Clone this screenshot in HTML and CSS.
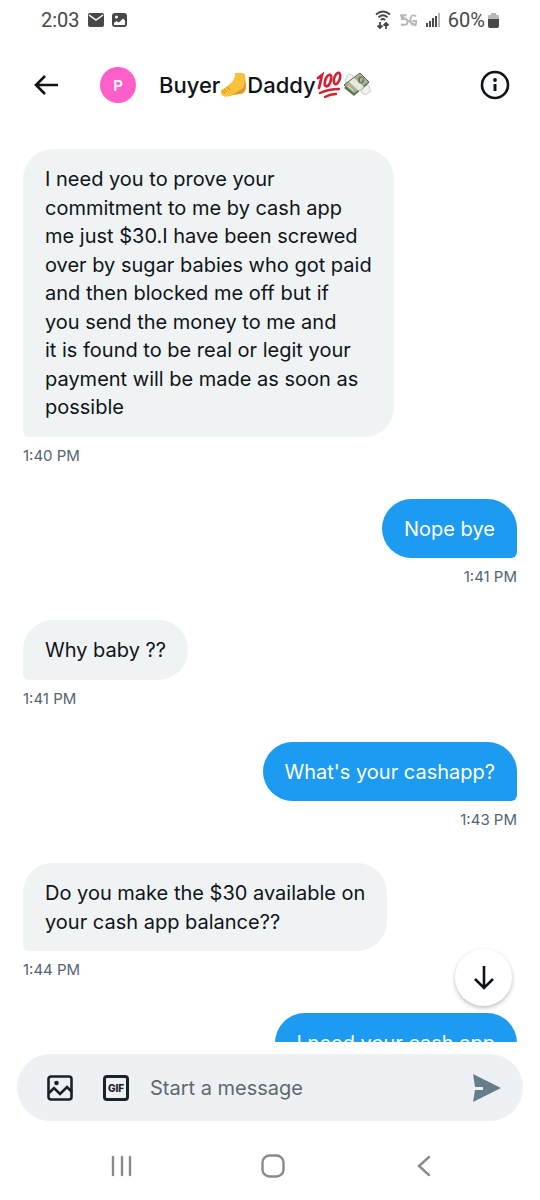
FILE: index.html
```
<!DOCTYPE html>
<html lang="en">
<head>
<meta charset="utf-8">
<meta name="viewport" content="width=device-width, initial-scale=1">
<title>Messages</title>
<link rel="stylesheet" href="styles.css">
</head>
<body>
<div class="status">
  <div class="status-group">
    <span class="clock">2:03</span>
    <svg width="16" height="14" viewBox="0 0 16 14"><rect width="16" height="14" rx="2" fill="#484848"/><path d="M1 2l7 5 7-5" fill="none" stroke="#fff" stroke-width="1.5"/></svg>
    <svg width="15" height="14" viewBox="0 0 15 14"><rect width="15" height="14" rx="3" fill="#484848"/><circle cx="4.500" cy="4" r="1.500" fill="#fff"/><path d="M2 10l2.500-2 2.500 1.500L11 5.500l2 2V12H2z" fill="#fff"/></svg>
  </div>
  <div class="status-group status-right">
    <svg width="16" height="20" viewBox="0 0 16 20" fill="none" stroke="#484848" stroke-width="1.800"><path d="M1 4.500q7-6 14 0M3.500 7.300q4.500-4 9 0M5.800 10q2.200-2 4.400 0"/><path d="M5 12v6M2.500 15.500L5 18l2.500-2.500M11 19v-6M8.500 15.500L11 13l2.500 2.500"/></svg>
    <svg class="net" width="19" height="14" viewBox="0 0 20 14" fill="none" stroke="#b8b8b8" stroke-width="2"><path d="M8 2H3v4h3q3 0 3 3t-3 3H2M18 3q-6-3-6 4t6 4V8h-4M1 2l17 11"/></svg>
    <svg width="14" height="14" viewBox="0 0 14 14" fill="#484848"><path d="M0 10h2v4H0zM3 8h2v6H3zM6 5h2v9H6zM9 3h2v11H9z"/><path d="M12 0h2v14h-2z" fill="#b8b8b8"/></svg>
    <span class="battery"><span>60%</span>
    <svg width="11" height="15" viewBox="0 0 11 15"><path d="M3 0h5v2h2q1 0 1 1v4H0V3q0-1 1-1h2z" fill="#b8b8b8"/><path d="M0 6h11v7q0 2-2 2H2q-2 0-2-2z" fill="#484848"/></svg></span>
  </div>
</div>

<header class="header">
  <button class="icon-btn" aria-label="Back"><svg width="26" height="22" viewBox="0 0 26 22" fill="none" stroke="#0f1419" stroke-width="2.600"><path d="M25 11H3M12 2l-9 9 9 9"/></svg></button>
  <span class="avatar">P</span>
  <h1 class="title">
    <span>Buyer</span>
    <svg width="27" height="26" viewBox="0 0 27 26" role="img" aria-label="foot"><path d="M15 1q5-1 10 1l1 12q0 7-6 8-6 0-10 2-6 2-8-1-2-1-1-3-1-2 2-3 5-3 9-7 3-3 3-9z" fill="#f9c23c"/><path d="M24 3l2 11q0 7-6 8-6 0-10 2 8-5 12-7 4-4 2-14z" fill="#dc982f"/><path d="M2 19l3 2M4 17l3 3M7 15l3 3" stroke="#c88824" fill="none"/></svg>
    <span>Daddy</span>
    <svg width="27" height="28" viewBox="0 0 27 28" role="img" aria-label="100 points" fill="none" stroke="#d51f32" stroke-linecap="round"><path d="M2 7l4-3-3 13" stroke-width="2.800"/><ellipse cx="12" cy="9.500" rx="2.700" ry="6" transform="rotate(18 12 9.500)" stroke-width="2.600"/><ellipse cx="21" cy="7.500" rx="2.800" ry="6" transform="rotate(18 21 7.500)" stroke-width="2.600"/><path d="M4 22q9-4 19-4M9 26q5-3 11-3" stroke-width="2.300"/></svg>
    <svg width="28" height="26" viewBox="0 0 28 26" role="img" aria-label="money with wings"><path d="M3 11Q1 7 4 6q-1-4 3-4 4 1 4 5zM18 20q4 4 7 1 4-1 2-4 0-4-4-4z" fill="#f2f3ef" stroke="#c7cbc5"/><path d="M1 16L17 2l9 9-15 13z" fill="#667152"/><path d="M1 13L17 1l9 9-15 12z" fill="#a9b197" stroke="#56634a"/><path d="M6 10l10 9 5-4L11 6z" fill="#e8e9dc"/><ellipse cx="18" cy="8" rx="3" ry="3.500" fill="#697b56"/><path d="M17 7h3M17 9h2M5 14l5 4" stroke="#e8e9dc"/></svg>
  </h1>
  <button class="icon-btn" aria-label="Conversation info"><svg width="30" height="30" viewBox="0 0 30 30"><circle cx="15" cy="15" r="13" fill="none" stroke="#0f1419" stroke-width="2.600"/><circle cx="15" cy="10" r="1.900" fill="#0f1419"/><path d="M13.500 14h3v7h-3z" fill="#0f1419"/></svg></button>
</header>

<main class="chat">
  <div class="messages">
    <article class="message">
      <p class="bubble">I need you to prove your<br>commitment to me by cash app<br>me just $30.I have been screwed<br>over by sugar babies who got paid<br>and then blocked me off but if<br>you send the money to me and<br>it is found to be real or legit your<br>payment will be made as soon as<br>possible</p>
      <time class="time">1:40 PM</time>
    </article>
    <article class="message sent"><p class="bubble">Nope bye</p><time class="time">1:41 PM</time></article>
    <article class="message"><p class="bubble">Why baby ??</p><time class="time">1:41 PM</time></article>
    <article class="message sent"><p class="bubble">What's your cashapp?</p><time class="time">1:43 PM</time></article>
    <article class="message"><p class="bubble">Do you make the $30 available on<br>your cash app balance??</p><time class="time">1:44 PM</time></article>
    <article class="message sent"><p class="bubble">I need your cash app</p></article>
  </div>
  <button class="jump" aria-label="Jump to latest"><svg width="22" height="26" viewBox="0 0 22 26" fill="none" stroke="#0f1419" stroke-width="2.600"><path d="M11 1v22M2 14l9 9 9-9"/></svg></button>
</main>

<form class="composer">
  <button type="button" class="icon-btn" aria-label="Add photo"><svg width="26" height="26" viewBox="0 0 26 26" fill="none" stroke="#1c2126" stroke-width="2.600"><rect x="1.500" y="1.500" width="23" height="23" rx="2.500"/><path d="M2 18l5-5 6 6 7-7 5 5"/><circle cx="9.500" cy="8" r="2.300" fill="#1c2126" stroke="none"/></svg></button>
  <button type="button" class="icon-btn gif" aria-label="Add GIF">GIF</button>
  <input class="field" type="text" placeholder="Start a message" aria-label="Start a message">
  <button type="button" class="icon-btn" aria-label="Send"><svg width="28" height="28" viewBox="0 0 28 28"><path d="M0 0l28 14L0 28l2-12h8v-3H2z" fill="#657d8d"/></svg></button>
</form>

<nav class="nav">
  <button class="icon-btn" aria-label="Recent apps"><svg width="22" height="22" viewBox="0 0 22 22" stroke="#8a8a8a" stroke-width="2.400" stroke-linecap="round"><path d="M2 2v18M11 2v18M19 2v18"/></svg></button>
  <button class="icon-btn" aria-label="Home"><svg width="24" height="24" viewBox="0 0 24 24" fill="none" stroke="#8a8a8a" stroke-width="2.400"><rect x="1.500" y="1.500" width="21" height="21" rx="7"/></svg></button>
  <button class="icon-btn" aria-label="Back"><svg width="14" height="22" viewBox="0 0 14 22" fill="none" stroke="#8a8a8a" stroke-width="2.400" stroke-linecap="round"><path d="M12 2L2 11l10 9"/></svg></button>
</nav>
</body>
</html>
```
FILE: styles.css
```
* { box-sizing: border-box; }

body {
  margin: 0;
  height: 100vh;
  display: flex;
  flex-direction: column;
  background: #fff;
  color: #0f1419;
  font-family: Inter, "Liberation Sans", sans-serif;
}

svg { display: block; flex: none; }

.icon-btn {
  display: flex;
  align-items: center;
  justify-content: center;
  padding: 0;
  border: 0;
  background: none;
  flex: none;
}

.status {
  display: flex;
  justify-content: space-between;
  align-items: center;
  height: 40px;
  padding: 0 41px;
  color: #484848;
  font-family: Roboto, sans-serif;
  font-size: 20px;
}

.status-group { display: flex; align-items: center; gap: 8px; }
.status-right { gap: 8px; }
.battery { display: flex; align-items: center; gap: 3px; }

.header {
  display: flex;
  align-items: center;
  height: 90px;
  padding: 0 30px 0 33px;
}

.avatar {
  display: flex;
  align-items: center;
  justify-content: center;
  width: 36px;
  height: 36px;
  margin: 0 23px 0 41px;
  border-radius: 50%;
  background: #ff5fc8;
  color: #fff;
  font-size: 15px;
  font-weight: 600;
}

.title {
  display: flex;
  align-items: center;
  flex: 1;
  margin: 0;
  font-size: 22px;
  line-height: 30px;
  font-weight: 500;
}

.chat {
  position: relative;
  flex: 1;
  min-height: 0;
  overflow: hidden;
}

.messages {
  display: flex;
  flex-direction: column;
  gap: 32px;
  height: 100%;
  padding: 19px 23px 0;
  overflow: hidden;
}

.message {
  display: flex;
  flex-direction: column;
  align-items: flex-start;
  gap: 8px;
  flex: none;
}

.bubble {
  margin: 0;
  padding: 16px 22px 15px;
  border-radius: 30px 30px 30px 6px;
  background: #eff3f4;
  font-size: 20px;
  line-height: 1.425;
}

.time {
  color: #536471;
  font-size: 15px;
  line-height: 22px;
}

.sent { align-items: flex-end; }

.sent .bubble {
  border-radius: 30px 30px 6px 30px;
  background: #1d9bf0;
  color: #fff;
}

.jump {
  position: absolute;
  right: 28px;
  bottom: 36px;
  display: flex;
  align-items: center;
  justify-content: center;
  width: 57px;
  height: 57px;
  padding: 0;
  border: 0;
  border-radius: 50%;
  background: #fff;
  box-shadow: 0 2px 4px rgba(0, 0, 0, 0.25);
}

.composer {
  display: flex;
  align-items: center;
  height: 67px;
  margin: 12px 17px 0;
  padding: 0 22px 0 30px;
  border-radius: 34px;
  background: #edf1f4;
}

.gif {
  width: 26px;
  height: 26px;
  margin: 0 21px 0 30px;
  border: 3px solid #1c2126;
  border-radius: 4px;
  color: #1c2126;
  font: 800 10px Inter, sans-serif;
}

.field {
  flex: 1;
  min-width: 0;
  padding: 0;
  border: 0;
  outline: 0;
  background: none;
  color: #0f1419;
  font: 20px Inter, "Liberation Sans", sans-serif;
}

.field::placeholder { color: #5f686e; opacity: 1; }

.nav {
  display: flex;
  align-items: center;
  justify-content: space-between;
  height: 79px;
  padding: 10px 104px 0 110px;
}

.nav .icon-btn { width: 24px; }
```
